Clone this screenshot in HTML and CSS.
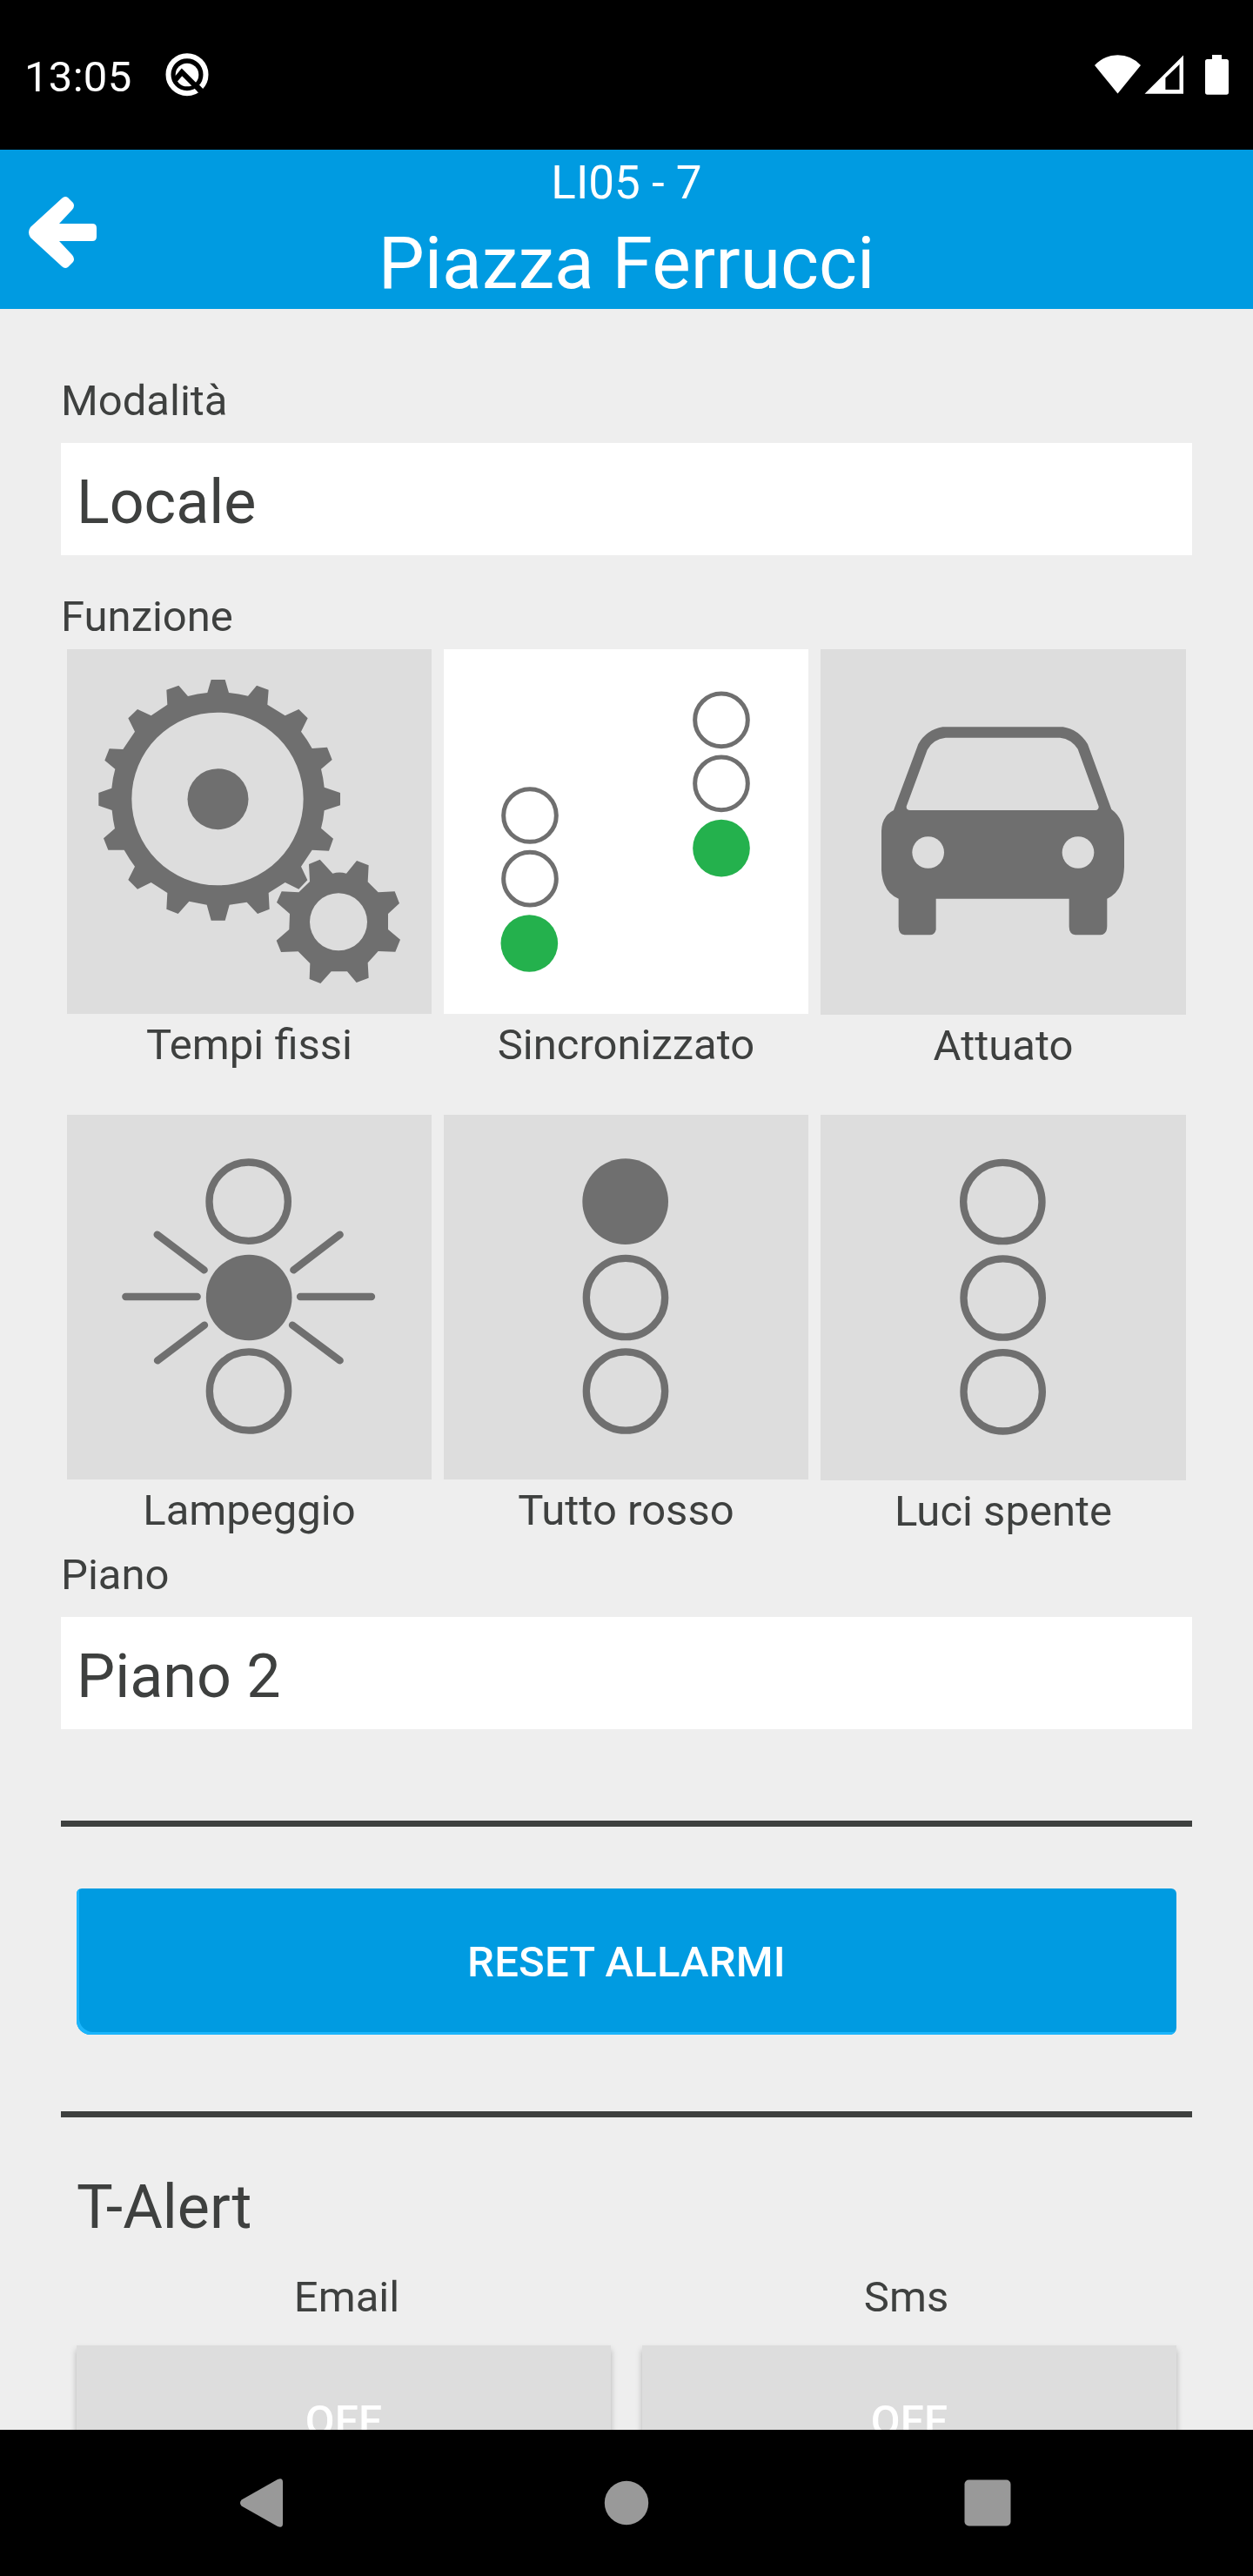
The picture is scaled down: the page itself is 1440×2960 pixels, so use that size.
FILE: index.html
```html
<!DOCTYPE html>
<html lang="it">
<head>
<meta charset="utf-8">
<title>Piazza Ferrucci</title>
<link rel="stylesheet" href="styles.css">
</head>
<body>
<div class="screen">
  <div class="status-bar">
    <span class="clock">13:05</span>
    <svg class="status-q" viewBox="0 0 186 186">
      <circle cx="90" cy="92" r="64.5" fill="none" stroke="#fff" stroke-width="18"/>
      <circle cx="90" cy="93" r="40" fill="#fff"/>
      <path d="M50 110L72 84L146 158" fill="none" stroke="#000" stroke-width="18"/>
      <path d="M121 135L130 126L144 140L127 154Z" fill="#000"/>
      <path d="M129 146L138 137" stroke="#000" stroke-width="20"/>
    </svg>
    <svg class="status-icons" viewBox="1250 55 170 62" fill="#fff">
      <path d="M1258 75Q1269 63.3 1284.5 63.3T1311 75L1284.5 107.5Z"/>
      <path fill-rule="evenodd" d="M1315.5 107.7L1360 63.5V107.7ZM1339.4 103H1355.5V74L1339.4 89.5Z"/>
      <path d="M1393 63H1404V68H1409.500Q1412 68 1412 70.500V106Q1412 108.700 1409.500 108.700H1387.500Q1385 108.700 1385 106V70.500Q1385 68 1387.500 68H1393Z"/>
    </svg>
  </div>

  <header class="app-header">
    <svg class="back" viewBox="33 225 78 84" fill="#fff">
      <path d="M68 257H106Q111 257 111 262V272Q111 277 106 277H68L83 293Q86.500 297 84 301L78 307Q74.500 309.500 71 306L35 273Q31 267 35 261L71 228Q74.500 224.500 78 227L84 233Q86.500 237 83 241Z"/>
    </svg>
    <div class="titles">
      <div class="subtitle">LI05 - 7</div>
      <h1 class="title">Piazza Ferrucci</h1>
    </div>
  </header>

  <main class="content">
    <div class="label">Modalità</div>
    <div class="field">Locale</div>
    <div class="label label-function">Funzione</div>

    <div class="tiles">
      <div class="tile">
        <svg class="tile-icon" viewBox="21 18 1257 1257">
          <path fill-rule="evenodd" d="M518 123H566L579 168Q613 171 645 179L675 143L716 158L712 209L773 247L820 225L851 256L828 302Q850 330 866 360L918 356L935 399L897 431Q905 462 908 494L963 513V556L908 574Q905 606 897 635L939 671L924 713L866 710L828 767L850 814L820 845L773 822L716 858L719 914L678 930L641 890L581 899L566 953H518L503 899L442 887L404 930L364 914L367 858L311 822L264 845L232 813L255 767Q235 740 218 710H163L147 670L186 636Q179 606 176 573L130 557V513L175 497Q178 462 187 431L151 401L167 361L214 363L255 302L232 256L264 225L311 247L367 209L364 158L406 143L438 180Q470 171 505 168ZM836 534A296 298 0 1 0 244 534A296 298 0 1 0 836 534Z"/>
          <circle cx="541.500" cy="534.500" r="105"/>
          <path fill-rule="evenodd" d="M893 743L937 791Q960 784 984 791L1020 747L1061 763L1058 820L1094 856L1151 853L1167 894L1128 930V984L1170 1019L1153 1061L1094 1059L1058 1099L1061 1151L1019 1167L987 1129H932L895 1170L857 1155L859 1101L818 1060L759 1062L743 1022L787 984L789 930L744 891L761 853L820 856L858 819L855 759ZM1056 958A99 99 0 1 0 858 958A99 99 0 1 0 1056 958Z"/>
        </svg>
        <div class="caption">Tempi fissi</div>
      </div>
      <div class="tile selected">
        <svg class="tile-icon" viewBox="30 18 1257 1257">
          <g class="ring thin">
            <circle cx="327" cy="591" r="91"/>
            <circle cx="327" cy="809" r="91"/>
            <circle cx="987" cy="262" r="91"/>
            <circle cx="987" cy="481" r="91"/>
          </g>
          <g class="green">
            <circle cx="325" cy="1032" r="98.500"/>
            <circle cx="987" cy="704" r="98.500"/>
          </g>
        </svg>
        <div class="caption">Sincronizzato</div>
      </div>
      <div class="tile wide">
        <svg class="tile-icon" viewBox="39 18 1260 1260">
          <path fill-rule="evenodd" d="M460 286H875Q928 294 960 345L1042 570Q1086 602 1086 670V768Q1084 852 1027 878V972Q1026 1003 1005 1003H918Q896 1000 896 974V878H437V985Q433 1003 416 1003H329Q308 1000 308 974V878Q254 856 249 780V645Q250 594 291 573L376 345Q404 296 460 286ZM470 323Q426 328 407 365L335 560Q335 573 348 573H987Q998 572 998 560L926 362Q903 327 865 323Z"/>
          <g class="lamp">
            <circle cx="410" cy="718.500" r="55"/>
            <circle cx="927" cy="718.500" r="55"/>
          </g>
        </svg>
        <div class="caption">Attuato</div>
      </div>
      <div class="tile">
        <svg class="tile-icon" viewBox="21 33 1257 1257">
          <g class="ring">
            <circle cx="647" cy="332" r="135.500"/>
            <circle cx="648" cy="985.500" r="135.500"/>
            <path d="M332 446L494 568M962 446L802 568M223 660H470M825 660H1071M333 880L495 758M798 758L962 880"/>
          </g>
          <circle cx="648.500" cy="663" r="148"/>
        </svg>
        <div class="caption">Lampeggio</div>
      </div>
      <div class="tile">
        <svg class="tile-icon" viewBox="21 33 1257 1257">
          <circle cx="647" cy="332" r="148"/>
          <g class="ring">
            <circle cx="648" cy="663" r="135.500"/>
            <circle cx="648" cy="985.500" r="135.500"/>
          </g>
        </svg>
        <div class="caption">Tutto rosso</div>
      </div>
      <div class="tile wide">
        <svg class="tile-icon" viewBox="21 33 1260 1260">
          <g class="ring">
            <circle cx="649" cy="333" r="135.500"/>
            <circle cx="650" cy="664.500" r="135.500"/>
            <circle cx="650" cy="988" r="135.500"/>
          </g>
        </svg>
        <div class="caption">Luci spente</div>
      </div>
    </div>

    <div class="label">Piano</div>
    <div class="field">Piano 2</div>

    <div class="reset-section">
      <button class="reset" type="button">RESET ALLARMI</button>
    </div>

    <h2 class="section-title">T-Alert</h2>
    <div class="alert-labels">
      <div>Email</div>
      <div>Sms</div>
    </div>
    <div class="alert-buttons">
      <button class="toggle email" type="button">OFF</button>
      <button class="toggle" type="button">OFF</button>
    </div>
  </main>

  <nav class="nav-bar">
    <svg class="nav-icons" viewBox="0 2792 1440 168" fill="#999">
      <path d="M277.500 2872.500L319 2849Q325 2846.500 325 2852V2900Q325 2905.500 319 2903L277.500 2879.500Q274.500 2876 277.500 2872.500Z"/>
      <circle cx="720" cy="2876" r="25.200"/>
      <rect x="1108.500" y="2849.500" width="53" height="53" rx="5"/>
    </svg>
  </nav>
</div>
</body>
</html>
```
FILE: styles.css
```css
* {
  box-sizing: border-box;
}

body {
  margin: 0;
  font-family: Roboto, "Liberation Sans", sans-serif;
  font-size: 49px;
  line-height: 59px;
  color: #3e403f;
  background: #eee;
}

h1,
h2 {
  margin: 0;
  font-weight: 400;
}

svg {
  display: block;
}

button {
  font: inherit;
  font-weight: 500;
  letter-spacing: 0.2px;
  color: #fff;
  border: 0;
  border-radius: 0;
  padding: 0;
}

.screen {
  width: 1440px;
  height: 2960px;
  display: flex;
  flex-direction: column;
  overflow: hidden;
}

/* System status bar */
.status-bar {
  flex: none;
  height: 172px;
  display: flex;
  align-items: flex-start;
  padding: 55px 20px 0 28px;
  background: #000;
  color: #fff;
}

.clock {
  width: 157px;
  padding-top: 4px;
  letter-spacing: 0.3px;
}

.status-q {
  width: 62px;
  height: 62px;
}

.status-icons {
  width: 170px;
  height: 62px;
  margin-left: auto;
}

/* App header */
.app-header {
  flex: none;
  height: 183px;
  display: grid;
  grid-template-columns: 78px 1fr 78px;
  align-items: start;
  padding: 7px 33px 0;
  background: #009be1;
  color: #fff;
}

.back {
  width: 78px;
  height: 84px;
  margin-top: 46px;
}

.titles {
  text-align: center;
}

.subtitle {
  font-size: 53px;
  line-height: 62px;
}

.title {
  margin-top: 13px;
  font-size: 84px;
  line-height: 98px;
}

/* Scrolling content */
.content {
  flex: 1;
  min-height: 0;
  overflow: hidden;
  padding: 76px 70px 0;
}

.field {
  height: 129px;
  margin-top: 19px;
  padding: 27px 18px 0;
  background: #fff;
  font-size: 70px;
  line-height: 82px;
}

.label-function {
  margin-top: 41px;
}

.tiles {
  display: grid;
  grid-template-columns: 419px 419px 420px;
  column-gap: 14px;
  row-gap: 50px;
  margin: 8px 7px 14px;
}

.tile-icon {
  width: 419px;
  height: 419px;
  background: #ddd;
  fill: #6f6f6f;
}

.wide .tile-icon {
  width: 420px;
  height: 420px;
}

.selected .tile-icon {
  background: #fff;
}

.ring {
  fill: none;
  stroke: #6f6f6f;
  stroke-width: 25px;
  stroke-linecap: round;
}

.ring.thin {
  stroke-width: 15px;
}

.green {
  fill: #24b14d;
}

.lamp {
  fill: #ddd;
}

.caption {
  margin-top: 6px;
  text-align: center;
}

.reset-section {
  margin-top: 105px;
  padding: 71px 18px 88px;
  border-top: 7px solid #3e403f;
  border-bottom: 7px solid #3e403f;
}

.reset {
  display: block;
  width: 100%;
  height: 168px;
  padding-top: 1px;
  border-radius: 6px 6px 8px 16px;
  background: #009be1;
  box-shadow: inset 3px -3px 0 #1cb5fb;
}

.section-title {
  margin: 62px 18px 33px;
  font-size: 70px;
  line-height: 82px;
}

.alert-labels {
  display: grid;
  grid-template-columns: 643px 643px;
  margin-left: 7px;
  text-align: center;
}

.alert-buttons {
  display: grid;
  grid-template-columns: 614px 614px;
  column-gap: 36px;
  margin: 26px 0 0 18px;
}

.toggle {
  height: 173px;
  background: #ddd;
  box-shadow: 0 5px 7px rgba(0, 0, 0, 0.25);
}

/* System navigation bar */
.nav-bar {
  flex: none;
  height: 168px;
  background: #000;
}

.nav-icons {
  width: 1440px;
  height: 168px;
}
```
